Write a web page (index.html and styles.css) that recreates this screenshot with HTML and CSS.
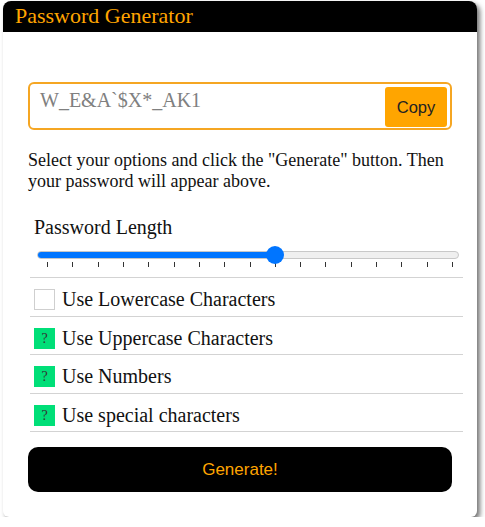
FILE: index.html
```html
<!DOCTYPE html>
<html>
<head>
<meta charset="utf-8">
<link rel="stylesheet" href="styles.css">
</head>
<body>
<div class="card">
  <div class="header">Password Generator</div>
  <div class="content">
    <div class="output">
      <div class="pw">W_E&amp;A`$X*_AK1</div>
      <button class="copy">Copy</button>
    </div>
    <p class="intro">Select your options and click the "Generate" button. Then your password will appear above.</p>
    <div class="settings">
      <div class="len-label">Password Length</div>
      <div class="slider">
        <div class="track"><div class="fill"></div></div>
        <div class="thumb"></div>
      </div>
      <div class="ticks">
        <span></span><span></span><span></span><span></span><span></span><span></span><span></span><span></span><span></span><span></span><span></span><span></span><span></span><span></span><span></span><span></span><span></span>
      </div>
      <ul class="options">
        <li class="opt"><span class="box"></span><span class="opt-text">Use Lowercase Characters</span></li>
        <li class="opt"><span class="box on">?</span><span class="opt-text">Use Uppercase Characters</span></li>
        <li class="opt"><span class="box on">?</span><span class="opt-text">Use Numbers</span></li>
        <li class="opt"><span class="box on">?</span><span class="opt-text">Use special characters</span></li>
      </ul>
    </div>
    <button class="generate">Generate!</button>
  </div>
</div>
</body>
</html>
```
FILE: styles.css
```css
html, body {
  margin: 0;
  padding: 0;
  background: #fff;
}
body {
  font-family: "Liberation Serif", "Times New Roman", serif;
  color: #111;
}
.card {
  margin: 1px 0 0 3px;
  width: 474px;
  background: #fff;
  border-radius: 8px 8px 6px 6px;
  box-shadow: 3px 3px 5px rgba(0,0,0,0.55);
}
.header {
  height: 29px;
  padding: 2px 0 0 12px;
  background: #000;
  color: #ffa500;
  font-size: 22px;
  line-height: 25px;
  border-radius: 8px 8px 0 0;
}
.content {
  padding: 50px 25px 25px 25px;
}
.output {
  display: flex;
  justify-content: space-between;
  align-items: flex-start;
  height: 48px;
  box-sizing: border-box;
  border: 2px solid #f5a623;
  border-radius: 6px;
  padding: 3px;
}
.pw {
  padding: 2px 0 0 7px;
  font-size: 20px;
  line-height: 23px;
  color: #808080;
}
.copy {
  width: 62px;
  height: 40px;
  border: none;
  border-radius: 3px;
  background: #ffa500;
  color: #222;
  font-family: "Liberation Sans", Arial, sans-serif;
  font-size: 16.5px;
  padding: 0;
}
.intro {
  margin: 20px 0 0 0;
  font-size: 18px;
  line-height: 21px;
}
.settings {
  margin: 24px -11px 0 2px;
}
.len-label {
  padding-left: 4px;
  font-size: 20px;
  line-height: 23px;
}
.slider {
  position: relative;
  height: 11px;
  padding-top: 5px;
  margin: 7px 4px 0 7px;
}
.track {
  height: 8px;
  box-sizing: border-box;
  border: 1px solid #c8c8c8;
  border-radius: 4px;
  background: #efefef;
  overflow: hidden;
}
.fill {
  width: 238px;
  height: 100%;
  background: #0075ff;
}
.thumb {
  position: absolute;
  left: 229px;
  top: 0;
  width: 18px;
  height: 18px;
  border-radius: 50%;
  background: #0075ff;
  z-index: 2;
}
.ticks {
  display: flex;
  justify-content: space-between;
  height: 5px;
  margin: 0 10px 10px 17px;
}
.ticks span {
  width: 1px;
  height: 5px;
  background: #333;
}
.options {
  list-style: none;
  margin: 0;
  padding: 0;
  border-top: 1px solid #d3d3d3;
}
.opt {
  display: flex;
  align-items: center;
  padding: 11px 0 5.5px 4px;
  border-bottom: 1px solid #d3d3d3;
}
.box {
  width: 21px;
  height: 21px;
  box-sizing: border-box;
  border: 1px solid #cfcfcf;
  background: #fff;
  font-size: 14px;
  line-height: 19px;
  text-align: center;
  color: #333;
}
.box.on {
  background: #00df78;
  border-color: #00df78;
}
.opt-text {
  margin-left: 7px;
  font-size: 20px;
  line-height: 21px;
}
.generate {
  display: block;
  width: 100%;
  height: 45px;
  margin-top: 15px;
  border: none;
  border-radius: 10px;
  background: #000;
  color: #ffa500;
  font-family: "Liberation Sans", Arial, sans-serif;
  font-size: 17px;
}
```
